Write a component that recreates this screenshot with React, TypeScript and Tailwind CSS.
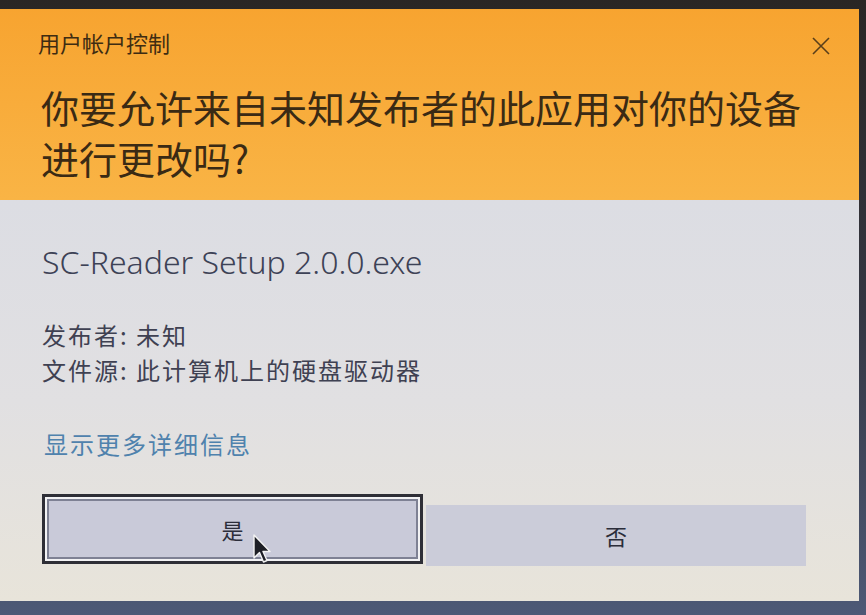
import React from 'react'

const cjk = { fontFamily: '"Noto Sans CJK SC", "Noto Sans", sans-serif' }
const latin = { fontFamily: '"Noto Sans", "Noto Sans CJK SC", sans-serif' }

function Cursor() {
    return (
        <svg className="absolute left-[253px] top-[534px]" width="20" height="32" viewBox="0 0 20 32">
            <path d="M1 1 L1 24 L6.5 18.5 L10.5 28 L14 26.5 L10 17.5 L17 17.5 Z" fill="#1e1f26" stroke="#f4f4f4" strokeWidth="1.4" strokeLinejoin="round" />
        </svg>
    )
}

export default function App() {
    return (
        <div className="relative w-[866px] h-[615px] overflow-hidden bg-gradient-to-b from-[#2a2624] via-[#343642] to-[#4d5976] pt-[9px] pr-[7px] pb-[14px]" style={cjk}>
            <div className="flex flex-col h-full">
                {/* Header */}
                <div className="h-[191px] bg-gradient-to-b from-[#f7a430] to-[#f9b445] px-[38px] pt-[18px] relative">
                    <div className="text-[22px] leading-[30px] text-[#3e2c12]">用户帐户控制</div>
                    <svg className="absolute right-[28px] top-[27px]" width="20" height="20" viewBox="0 0 20 20">
                        <path d="M2 2 L18 18 M18 2 L2 18" stroke="#5a3f1a" strokeWidth="1.6" />
                    </svg>
                    <div className="mt-[24px] pl-[3px] text-[38px] leading-[51px] text-[#3a2a14]">
                        你要允许来自未知发布者的此应用对你的设备<br />进行更改吗?
                    </div>
                </div>

                {/* Body */}
                <div className="flex-1 bg-gradient-to-b from-[#dcdde3] via-[#e1e0e2] to-[#e8e4da] px-[42px] pt-[40px]">
                    <div className="text-[32px] leading-[44px] font-light text-[#3d4256]" style={latin}>
                        SC-Reader Setup 2.0.0.exe
                    </div>
                    <div className="mt-[33px] text-[24px] leading-[35px] tracking-[2px] text-[#3f4152]">
                        <div>发布者: 未知</div>
                        <div>文件源: 此计算机上的硬盘驱动器</div>
                    </div>
                    <div className="mt-[40px] pl-[2px] text-[24px] leading-[34px] tracking-[2px] text-[#4f82ad]">显示更多详细信息</div>

                    <div className="mt-[33px] flex gap-[3px]">
                        <div className="w-[381px] h-[70px] border-[3px] border-[#2e2e36] bg-[#f2f2f4] p-[2px]">
                            <div className="h-full border-2 border-[#7e8194] bg-[#c9cad9] flex items-center justify-center text-[22px] text-[#2b2d3a]">
                                是
                            </div>
                        </div>
                        <div className="w-[380px] h-[61px] mt-[11px] bg-[#cbccd9] flex items-center justify-center text-[22px] text-[#2b2d3a]">
                            否
                        </div>
                    </div>
                </div>
            </div>
            <Cursor />
        </div>
    )
}
